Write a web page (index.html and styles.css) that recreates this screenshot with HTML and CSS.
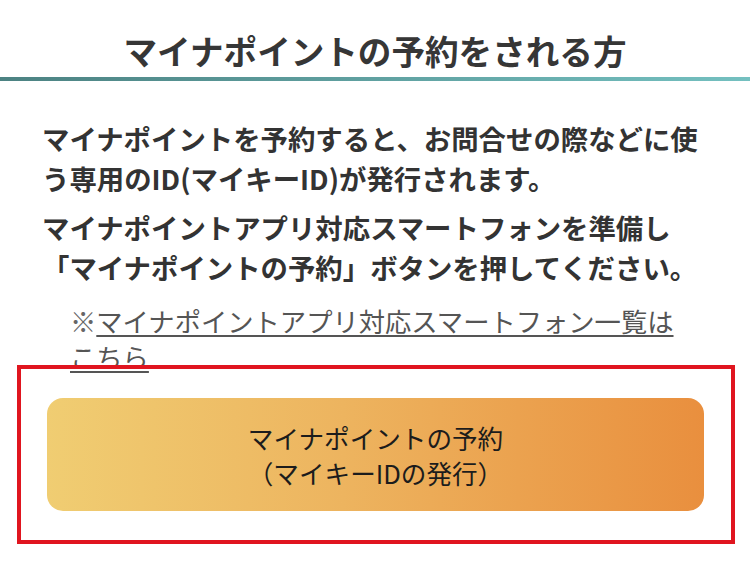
FILE: index.html
```html
<!DOCTYPE html>
<html lang="ja">
<head>
<meta charset="utf-8">
<title>マイナポイントの予約をされる方</title>
<link rel="stylesheet" href="styles.css">
</head>
<body>
<header class="head">
  <h1 class="head-title">マイナポイントの予約をされる方</h1>
  <div class="head-rule"></div>
</header>
<main class="content">
  <p class="lead">マイナポイントを予約すると、お問合せの際などに使う専用のID(マイキーID)が発行されます。</p>
  <p class="lead lead-second">マイナポイントアプリ対応スマートフォンを準備し<br>「マイナポイントの予約」ボタンを押してください。</p>
  <p class="note"><span class="note-mark">※</span><a class="note-link" href="#">マイナポイントアプリ対応スマートフォン一覧はこちら</a></p>
</main>
<section class="cta">
  <a class="cta-button" href="#">
    <span class="cta-line">マイナポイントの予約</span>
    <span class="cta-line">（マイキーIDの発行）</span>
  </a>
</section>
</body>
</html>
```

FILE: styles.css
```css
html, body {
  margin: 0;
  padding: 0;
  background: #ffffff;
}

body {
  width: 750px;
  font-family: "Noto Sans CJK JP", "Noto Sans", sans-serif;
  color: #333333;
}

.head {
  padding-top: 31px;
}

.head-title {
  margin: 0 0 6px;
  font-size: 33.6px;
  line-height: 40px;
  font-weight: 700;
  text-align: center;
  color: #363636;
}

.head-rule {
  height: 4px;
  background: linear-gradient(to right, #4c8282, #74c0c0);
}

.content {
  padding: 37px 42px 0;
}

.lead {
  margin: 0;
  font-size: 27.4px;
  line-height: 40px;
  font-weight: 700;
  color: #333333;
}

.lead-second {
  margin-top: 9px;
}

.note {
  margin: 16px 18px 0 28px;
  font-size: 26.3px;
  line-height: 36px;
  font-weight: 400;
  color: #666666;
}

.note-link {
  color: #555555;
  text-decoration: underline;
  text-underline-offset: 3px;
}

.cta {
  position: relative;
  margin: -10px 15px 0 17px;
  border: 4px solid #e0151f;
  padding: 29px 27px 29px 26px;
}

.cta-button {
  display: flex;
  flex-direction: column;
  align-items: center;
  justify-content: center;
  height: 113px;
  border-radius: 16px;
  background: linear-gradient(to right, #f0cd72, #edb45f 45%, #e98f3e);
  color: #1c1c1c;
  text-decoration: none;
  font-size: 25.6px;
  line-height: 35px;
  font-weight: 400;
}
```
